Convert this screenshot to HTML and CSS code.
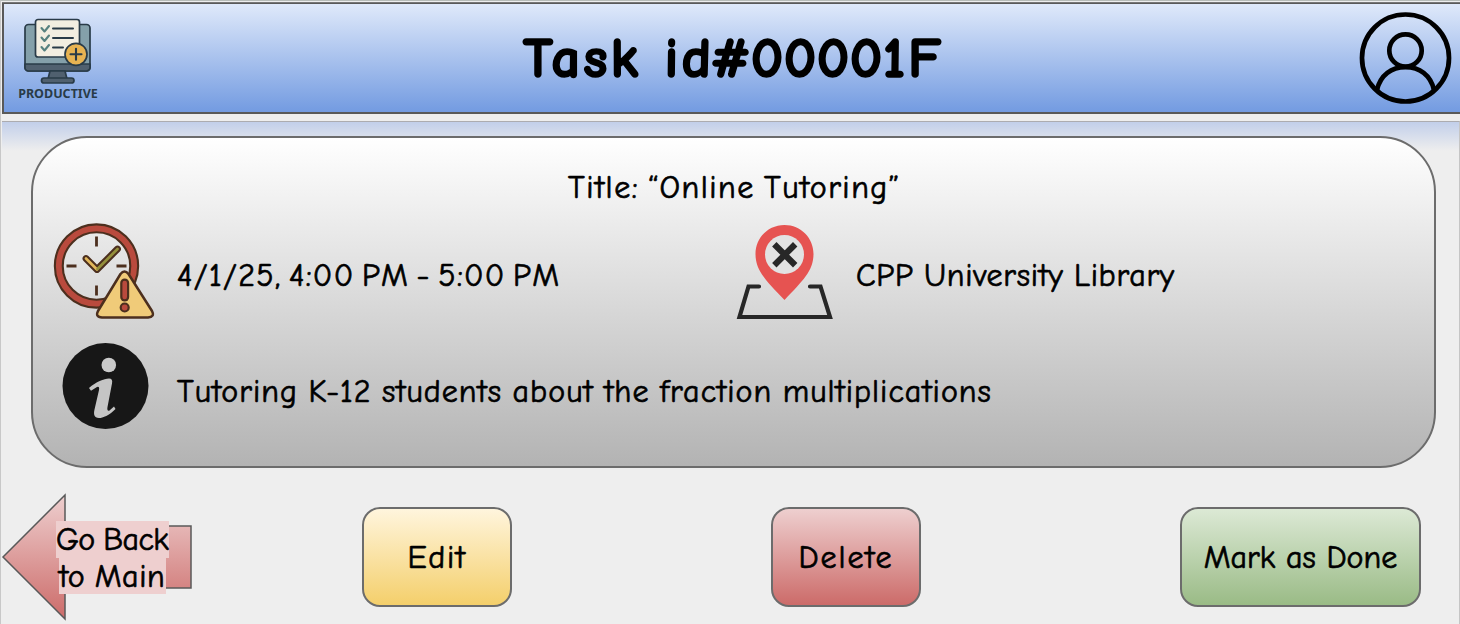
FILE: index.html
```html
<!DOCTYPE html>
<html lang="en">
<head>
<meta charset="utf-8">
<title>Task id#00001F</title>
<link rel="stylesheet" href="styles.css">
</head>
<body>
<div class="page">
  <header class="header">
    <div class="brand">
      <svg class="brand-icon" width="70" height="68" viewBox="0 0 70 68" fill="none" stroke="#293b48" stroke-width="1.7" stroke-linejoin="round" stroke-linecap="round">
        <rect x="2" y="6.5" width="65" height="46.500" rx="3.500" fill="#84a0aa"/>
        <path d="M2 46h65v3.500a3.500 3.500 0 0 1-3.500 3.500H5.500a3.500 3.500 0 0 1-3.500-3.500z" fill="#50606f"/>
        <path d="M27 53h15l2 8h-19z" fill="#50606f"/>
        <rect x="18.500" y="60" width="32.500" height="5" rx="2.500" fill="#50606f"/>
        <rect x="12.500" y="1.500" width="44" height="37.500" rx="2.500" fill="#f2eee1"/>
        <path d="M30 10.500h20M30 20h20M30 29.500h10" stroke-width="2"/>
        <path d="M18.500 10l3 3.500 4.500-5.500M18.500 19.500l3 3.500 4.500-5.500M18.500 29l3 3.500 4.500-5.500" stroke="#56817f" stroke-width="2.100"/>
        <circle cx="53" cy="36.300" r="11" fill="#e7b352"/>
        <path d="M47.500 36.300h11M53 30.800v11" stroke-width="2.100"/>
      </svg>
      <span class="brand-name">PRODUCTIVE</span>
    </div>
    <h1 class="heading">Task id<span class="hash">#</span><span class="digits">0000</span>1F</h1>
    <svg class="avatar" width="94" height="94" viewBox="0 0 94 94" fill="none" stroke="#000" stroke-width="4.700">
      <circle cx="46.500" cy="47" r="43.500"/>
      <circle cx="46.500" cy="39.500" r="16.200"/>
      <path d="M18 79C21.500 64 32.500 56.200 46.500 56.200S71.500 64 75 79"/>
    </svg>
  </header>

  <main class="content">
    <section class="card">
      <h2 class="title">Title: “Online Tutoring”</h2>
      <div class="row">
        <svg class="icon-clock" width="104" height="100" viewBox="0 0 104 100" fill="none" stroke="#4c2f1e" stroke-width="2" stroke-linecap="round" stroke-linejoin="round">
          <circle cx="44.500" cy="44" r="37.700" stroke="#4c2f1e" stroke-width="10"/>
          <circle cx="44.500" cy="44" r="37.700" stroke="#b94a3d" stroke-width="5.800"/>
          <path d="M44.500 14.500v10M44.500 63.500v10M14.500 44h10M64.500 44h10" stroke-width="2.800" stroke-linecap="butt"/>
          <path d="M34 36.500L45 47.500 65.500 27" stroke-width="6.800"/>
          <path d="M34 36.500L45 47.500" stroke="#e1b75b" stroke-width="2.700"/>
          <path d="M45.500 47L65.500 27" stroke="#948f3b" stroke-width="2.700"/>
          <path d="M68.500 52q4-5 8 0l23.500 37q3 6-4 6.500H50q-7-.5-4-6.500z" fill="#f0cb79" stroke-width="2.500"/>
          <path d="M72.700 61V75" stroke-width="9"/>
          <path d="M72.700 61V75" stroke="#b94a3d" stroke-width="4.600"/>
          <circle cx="72.700" cy="85.500" r="4" fill="#b94a3d" stroke-width="2.200"/>
        </svg>
        <span class="text when">4/1/25, 4:00 PM - 5:00 PM</span>
        <svg class="icon-place" width="98" height="98" viewBox="0 0 98 98" fill="none">
          <path d="M48.500 1C32 1 19.500 14 19.500 30c0 17 11 27 29 46 18-19 29-29 29-46C77.500 14 65 1 48.500 1z" fill="#e65351"/>
          <circle cx="48.500" cy="30.500" r="19.500" fill="#e2e2e2"/>
          <path d="M40.500 22.500L57 39M57 22.500L40.500 39" stroke="#272727" stroke-width="6.200" stroke-linecap="square"/>
          <path d="M23 62.500H12.500L3.500 93H94L84.500 62.500H74" stroke="#272727" stroke-width="4.200" stroke-linecap="round"/>
        </svg>
        <span class="text where">CPP University Library</span>
      </div>
      <div class="row detail">
        <svg class="icon-info" width="88" height="88" viewBox="0 0 88 88">
          <circle cx="43.500" cy="44" r="43" fill="#171717"/>
          <circle cx="46.800" cy="23" r="7.300" fill="#cacaca"/>
          <path d="M27 46C34 40 42 36.500 47 36.500q4 0 3 5L45.500 65q-.8 4.500 2 3.500l4.500-4 1.500 2.500C47 73.500 41 76 37 76c-5 0-5.500-4-4.600-8L37 48q.7-4-2-3L29 48.700z" fill="#c5c5c5"/>
        </svg>
        <span class="text note">Tutoring K-12 students about the fraction multiplications</span>
      </div>
    </section>

    <nav class="actions">
      <a class="back">
        <svg class="arrow" width="192" height="128" viewBox="0 0 192 128">
          <defs>
            <linearGradient id="arrow-fill" x1="0" y1="0" x2="0" y2="1">
              <stop offset="0" stop-color="#eecfcf"/>
              <stop offset="1" stop-color="#cc6b69"/>
            </linearGradient>
          </defs>
          <path d="M3 64L65 2V33H191V95H65V126z" fill="url(#arrow-fill)" stroke="#595959" stroke-width="1.500"/>
        </svg>
        <span class="back-label"><span class="line first">Go Back</span><span class="line second">to Main</span></span>
      </a>
      <button class="button edit"><span>Edit</span></button>
      <button class="button delete"><span>Delete</span></button>
      <button class="button done"><span>Mark as Done</span></button>
    </nav>
  </main>
</div>
</body>
</html>
```
FILE: styles.css
```css
* { box-sizing: border-box; }

body {
  margin: 0;
  background: #eee;
  color: #000;
  font-family: "Comic Sans MS", "Comic Neue", "Open Sans", sans-serif;
  font-variant-ligatures: none;
}

.page {
  display: flex;
  flex-direction: column;
  gap: 7px;
  width: 1460px;
  height: 624px;
  padding: 2px 0 0 1px;
  border-top: 1px solid #b7bcb8;
  border-left: 1px solid #c8c8c8;
  overflow: hidden;
}

.header {
  display: flex;
  flex: none;
  align-items: flex-start;
  justify-content: space-between;
  height: 111px;
  padding: 0 7px 0 14px;
  border: 2px solid #595959;
  border-width: 1px 0 2px 2px;
  background: linear-gradient(#dfe9fa, #739be1);
  box-shadow: 0 -1px #777;
}

.brand {
  display: flex;
  flex-direction: column;
  align-items: center;
  width: 80px;
  margin-top: 14px;
}

.brand-icon { display: block; }

.brand-name {
  font: bold 12.5px/16px "Noto Sans", sans-serif;
  color: #293b48;
}

.heading {
  width: 421px;
  margin: 18px 0 0 10px;
  font-size: 57px;
  line-height: 74px;
  font-weight: 700;
  letter-spacing: 3px;
  white-space: nowrap;
  -webkit-text-stroke: 1.7px #000;
}

.hash { margin-left: -4px; letter-spacing: 0; }
.digits { letter-spacing: 0.4px; }

.avatar { margin-top: 7px; }

.content {
  flex: 1;
  padding: 14px 23px 0 28px;
  border: 1px solid #acacb0;
  border-left: 0;
  border-bottom: 0;
  border-right-color: #c5c5c5;
  background: linear-gradient(#c2cfea, #eee 29px);
}

.card {
  height: 332px;
  margin-left: 1px;
  padding: 28px 20px 0 19px;
  border: 2px solid #6c6c6c;
  border-radius: 56px;
  background: linear-gradient(#fff, #b3b3b3);
}

.title, .text, .button, .line {
  font-size: 32px;
  font-weight: 400;
  white-space: nowrap;
  -webkit-text-stroke: 0.7px #000;
}

.title {
  width: 330px;
  height: 44px;
  margin: 0 auto;
  line-height: 44px;
  letter-spacing: 1.5px;
  word-spacing: -3px;
}

.row {
  display: flex;
  align-items: center;
  height: 100px;
  margin-top: 12px;
}

.icon-clock { margin-right: 21px; }
.when { width: 382px; letter-spacing: 1.3px; word-spacing: -4.5px; }
.where { letter-spacing: 0.7px; word-spacing: -1px; }
.icon-place { margin: 2px 22px 0 177px; }

.detail { height: 88px; margin-top: 20px; padding-left: 10px; }
.icon-info { margin: 0 27px 0 0; }
.note { margin-top: 10px; letter-spacing: 1.03px; word-spacing: -1.3px; }
.when, .where { margin-top: 6px; }

.actions {
  display: flex;
  height: 128px;
  margin: 24px 0 0 -30px;
  padding-top: 1px;
}

.back { position: relative; flex: none; width: 192px; margin-right: 170px; }
.arrow { display: block; }

.back-label {
  position: absolute;
  top: 28px;
  left: 56px;
  display: flex;
  flex-direction: column;
  align-items: center;
  width: 113px;
}

.line { height: 37px; line-height: 37px; background: #eecfcf; }
.second { height: 36px; }
.first { width: 113px; letter-spacing: -0.6px; word-spacing: -1.5px; }
.second { width: 107px; letter-spacing: 0.6px; word-spacing: -2px; }

.button {
  flex: none;
  width: 150px;
  height: 100px;
  margin: 14px 0 0;
  padding: 0;
  border: 2px solid #6c6c6c;
  border-radius: 18px;
  color: #000;
  font-family: inherit;
}

.edit { background: linear-gradient(#fff5dd, #f4cf6b); letter-spacing: 1.6px; }
.delete { margin-left: 259px; background: linear-gradient(#eecfcf, #cc6b69); letter-spacing: 1.9px; }
.done { width: 241px; margin-left: 259px; background: linear-gradient(#dce9d5, #9abb86); }
```
